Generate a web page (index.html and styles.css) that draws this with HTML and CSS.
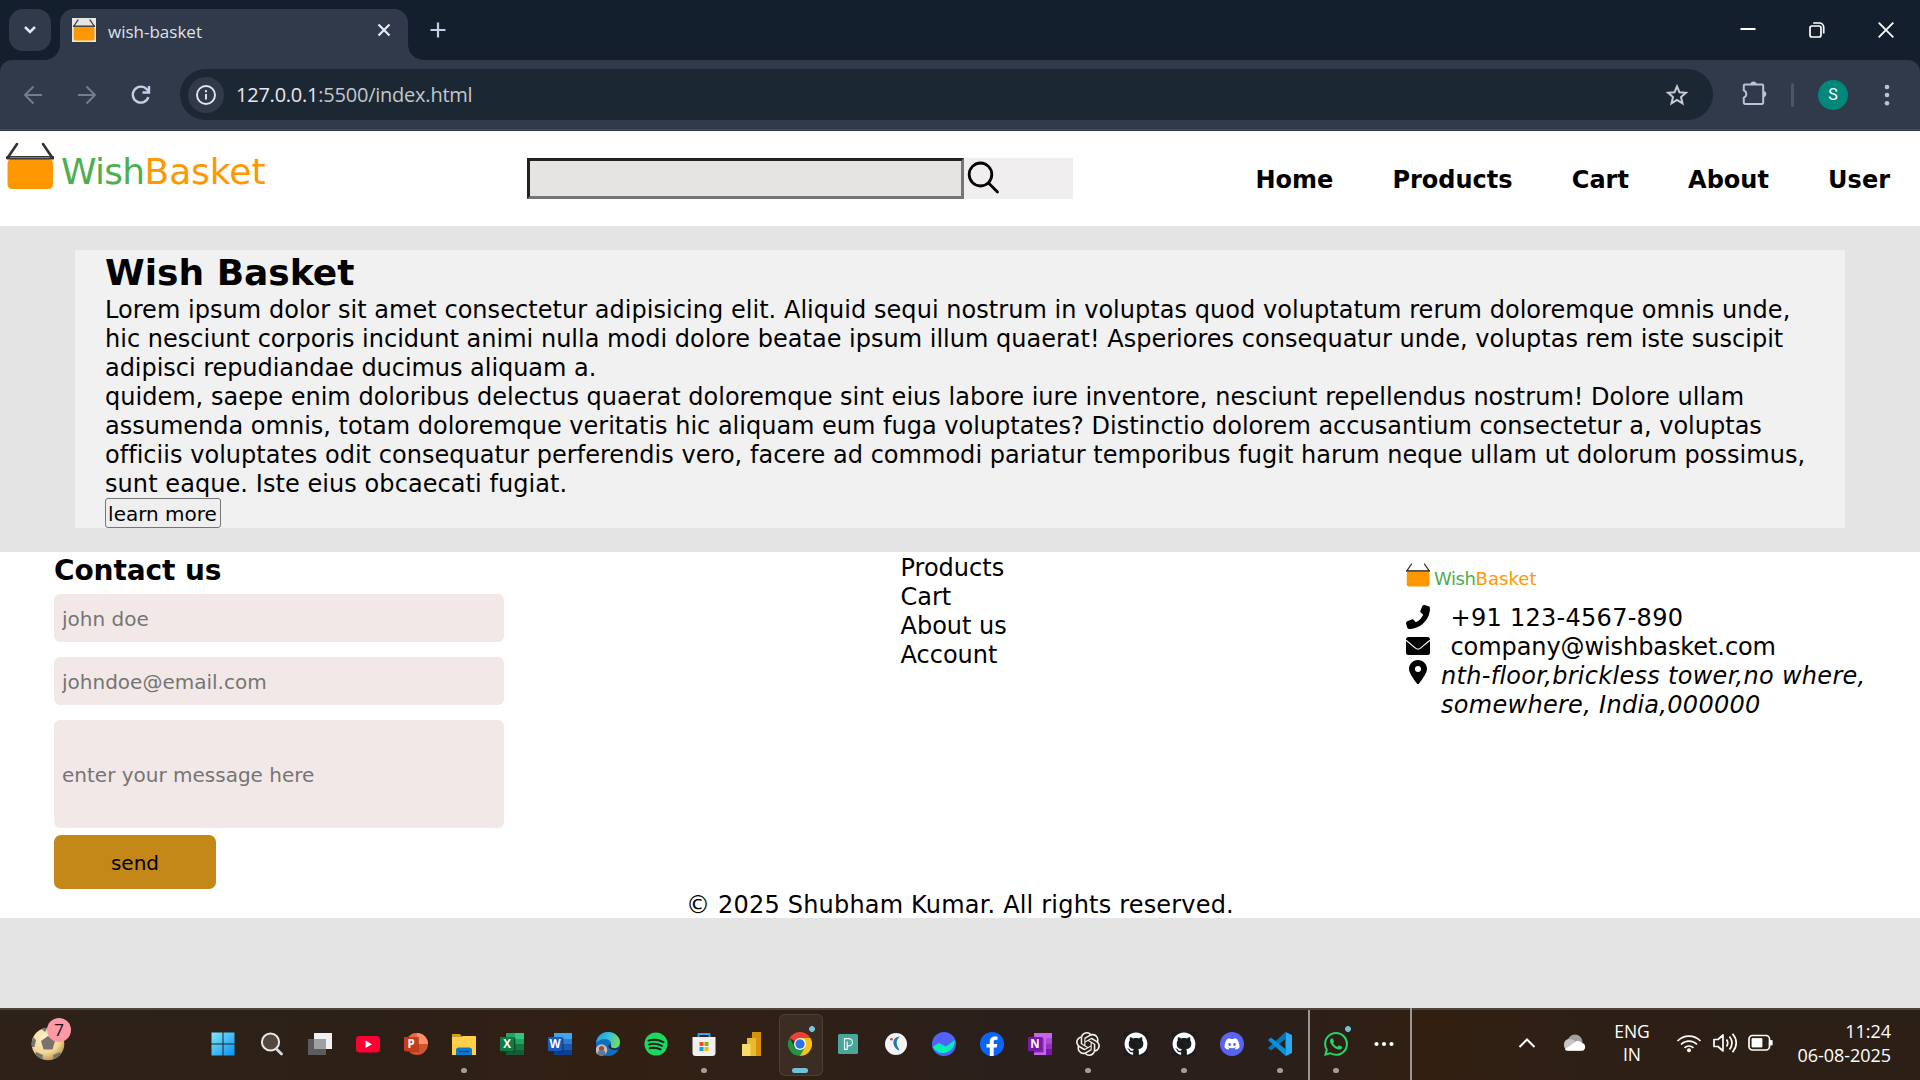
FILE: index.html
```html
<!DOCTYPE html>
<html lang="en">
<head>
<meta charset="utf-8">
<title>wish-basket</title>
<link rel="stylesheet" href="styles.css">
</head>
<body>
<svg class="defs" aria-hidden="true">
  <symbol id="basket" viewBox="0 0 48 48">
    <rect x="1.5" y="17" width="45.5" height="30" rx="4.5" fill="#ff9800"/>
    <path d="M11 2L2 15.3M37 2l9 13.3" stroke="#333" stroke-width="2.6" stroke-linecap="round"/>
    <path d="M1.5 15.8h45.5" stroke="#333" stroke-width="3.4" stroke-linecap="round"/>
    <path d="M4 15.6h40" stroke="#8a8a8a" stroke-width="1"/>
  </symbol>
  <symbol id="github" viewBox="-.4 -.4 16.8 16.8">
    <path fill="#1c1c1f" d="M-.4-.4h16.8v16.8H-.4z"/>
    <path fill="#fff" d="M8 0C3.58 0 0 3.58 0 8c0 3.54 2.29 6.53 5.47 7.59.4.07.55-.17.55-.38 0-.19-.01-.82-.01-1.49-2.01.37-2.53-.49-2.69-.94-.09-.23-.48-.94-.82-1.13-.28-.15-.68-.52-.01-.53.63-.01 1.08.58 1.23.82.72 1.21 1.87.87 2.33.66.07-.52.28-.87.51-1.07-1.78-.2-3.64-.89-3.64-3.95 0-.87.31-1.59.82-2.15-.08-.2-.36-1.02.08-2.12 0 0 .67-.21 2.2.82.64-.18 1.32-.27 2-.27s1.36.09 2 .27c1.53-1.04 2.2-.82 2.2-.82.44 1.1.16 1.92.08 2.12.51.56.82 1.27.82 2.15 0 3.07-1.87 3.75-3.65 3.95.29.25.54.73.54 1.48 0 1.07-.01 1.93-.01 2.2 0 .21.15.46.55.38A8.01 8.01 0 0016 8c0-4.42-3.58-8-8-8z"/>
  </symbol>
</svg>

<div class="tabstrip">
  <div class="tab-menu"><svg width="16" height="10" viewBox="0 0 16 10" fill="none" stroke="#e2e6ef" stroke-width="2.5"><path d="M3 2l5 5 5-5"/></svg></div>
  <div class="tab">
    <span class="favicon"><svg width="22" height="22"><use href="#basket"/></svg></span>
    <span class="tab-title">wish-basket</span>
    <svg class="tab-close" width="14" height="14" viewBox="0 0 14 14" stroke="#e8eaf0" stroke-width="2.2"><path d="M1.5 1.5l11 11M12.500 1.5l-11 11"/></svg>
  </div>
  <svg class="new-tab" width="16" height="16" viewBox="0 0 16 16" stroke="#c3cfe6" stroke-width="2.2"><path d="M8 .5v15M.5 8h15"/></svg>
  <div class="window-controls">
    <svg width="16" height="16" viewBox="0 0 16 16"><path d="M.5 7h15" stroke="#fff" stroke-width="2"/></svg>
    <svg width="16" height="16" viewBox="0 0 16 16" fill="none" stroke="#fff" stroke-width="1.7"><rect x="1" y="4" width="11" height="11" rx="2"/><path d="M4.200 1h6.300a4.200 4.200 0 0 1 4.200 4.200v6.300"/></svg>
    <svg width="16" height="16" viewBox="0 0 16 16" stroke="#fff" stroke-width="1.8"><path d="M.7.7l14.600 14.600M15.300.7L.7 15.300"/></svg>
  </div>
</div>

<div class="toolbar-back">
<div class="toolbar">
  <div class="nav-buttons">
    <svg width="20" height="20" viewBox="0 0 20 20" fill="none" stroke="#727d8e" stroke-width="2"><path d="M19 10H2M10.500 1.500L2 10l8.500 8.500"/></svg>
    <svg width="20" height="20" viewBox="0 0 20 20" fill="none" stroke="#727d8e" stroke-width="2"><path d="M1 10h17M9.500 1.500L18 10l-8.500 8.500"/></svg>
    <svg width="20" height="20" viewBox="0 0 20 20" fill="none" stroke="#c3cfe6" stroke-width="2.400"><path d="M17.400 12.200A8 8 0 1 1 15.800 4.300L17.500 6.200"/><path d="M18 1v6.500h-6.500"/></svg>
  </div>
  <div class="omnibox">
    <span class="site-info"><svg width="20" height="20" viewBox="0 0 20 20" fill="none" stroke="#e3e6ed" stroke-width="1.900"><circle cx="10" cy="10" r="9"/><path d="M10 9v5.600M10 5v2.200"/></svg></span>
    <span class="url"><b>127.0.0.1</b>:5500/index.html</span>
    <svg class="star" width="24" height="24" viewBox="0 0 24 24" fill="none" stroke="#c9cbd1" stroke-width="2"><path d="M12 3.300l2.500 6 6.400.5-4.900 4.200 1.500 6.300L12 17l-5.500 3.300L8 14 3.100 9.800l6.400-.5z"/></svg>
  </div>
  <svg class="puzzle" width="26" height="26" viewBox="0 0 26 26"><path d="M4 4.500h17a1.200 1.200 0 0 1 1.200 1.200v17a1.200 1.200 0 0 1-1.200 1.200H4a1.200 1.200 0 0 1-1.200-1.200v-5a4 4 0 0 0 0-7.400V5.700A1.200 1.200 0 0 1 4 4.500z" fill="none" stroke="#b8c4dc" stroke-width="2"/><path d="M9.400 4.500a3.100 3.100 0 0 1 6.200 0zM22.200 11a3.100 3.100 0 0 1 0 6.200z" fill="#b8c4dc"/></svg>
  <span class="divider"></span>
  <span class="avatar">S</span>
  <svg class="kebab" width="6" height="24" viewBox="0 0 6 24" fill="#b8c4dc"><circle cx="3" cy="4" r="2.300"/><circle cx="3" cy="12" r="2.300"/><circle cx="3" cy="20.300" r="2.300"/></svg>
</div>
</div>

<header class="site-header">
  <svg class="logo" width="280" height="60" viewBox="0 0 280 60"><use href="#basket" x="0" y="0" width="48" height="48"/><text x="55" y="42" font-size="36" fill="#4caf50" textLength="84">Wish</text><text x="138.500" y="42" font-size="36" fill="#ff9800" textLength="121">Basket</text></svg>
  <form class="search">
    <input class="search-input" aria-label="Search">
    <svg width="40" height="40" viewBox="0 0 40 40" fill="none" stroke="#000" stroke-width="2.800"><ellipse cx="16.500" cy="16.500" rx="11.300" ry="11.500"/><path d="M24.500 25l9 9" stroke-linecap="round"/></svg>
  </form>
  <nav class="site-nav"><a>Home</a><a>Products</a><a>Cart</a><a>About</a><a>User</a></nav>
</header>

<main class="main">
  <section class="hero">
    <h1>Wish Basket</h1>
    <p><span class="l1">Lorem ipsum dolor sit amet consectetur adipisicing elit. Aliquid sequi nostrum in voluptas quod voluptatum rerum doloremque omnis unde,</span>
    <span class="l2">hic nesciunt corporis incidunt animi nulla modi dolore beatae ipsum illum quaerat! Asperiores consequatur unde, voluptas rem iste suscipit</span>
    <span class="l3">adipisci repudiandae ducimus aliquam a.</span>
    <span class="l4">quidem, saepe enim doloribus delectus quaerat doloremque sint eius labore iure inventore, nesciunt repellendus nostrum! Dolore ullam</span>
    <span class="l5">assumenda omnis, totam doloremque veritatis hic aliquam eum fuga voluptates? Distinctio dolorem accusantium consectetur a, voluptas</span>
    <span class="l6">officiis voluptates odit consequatur perferendis vero, facere ad commodi pariatur temporibus fugit harum neque ullam ut dolorum possimus,</span>
    <span class="l7">sunt eaque. Iste eius obcaecati fugiat.</span></p>
    <button class="learn">learn more</button>
  </section>
</main>

<footer class="site-footer">
  <div class="footer-grid">
    <form class="contact">
      <h3>Contact us</h3>
      <input placeholder="john doe">
      <input placeholder="johndoe@email.com">
      <input class="message" placeholder="enter your message here">
      <button type="button" class="send">send</button>
    </form>
    <ul class="links"><li>Products</li><li>Cart</li><li>About us</li><li>Account</li></ul>
    <div class="company">
      <svg class="logo-small" width="140" height="28" viewBox="0 0 140 28"><use href="#basket" x="0" y="0" width="24" height="24"/><text x="28" y="22" font-size="18" fill="#4caf50" textLength="42">Wish</text><text x="69.500" y="22" font-size="18" fill="#ff9800" textLength="61">Basket</text></svg>
      <div class="row">
        <svg class="phone" width="24" height="24" viewBox="0 0 512 512"><path transform="matrix(-1 0 0 1 512 0)" d="M164.900 24.600c-7.700-18.600-28-28.500-47.400-23.200l-88 24C12.100 30.200 0 46 0 64C0 311.400 200.600 512 448 512c18 0 33.800-12.100 38.600-29.500l24-88c5.300-19.400-4.600-39.700-23.200-47.400l-96-40c-16.300-6.800-35.200-2.100-46.300 11.600L304.700 368C234.300 334.700 177.300 277.700 144 207.300L193.300 167c13.700-11.200 18.400-30 11.600-46.300l-40-96z"/></svg>
        <span class="tel">+91 123-4567-890</span>
      </div>
      <div class="row">
        <svg class="mail" width="24" height="18" viewBox="0 0 24 18"><rect width="24" height="18" rx="2.500"/><path d="M0 3.200l9.500 7.900q2.500 2 5 0L24 3.200" fill="none" stroke="#fff" stroke-width="1.200"/></svg>
        <span class="email">company@wishbasket.com</span>
      </div>
      <div class="row address">
        <svg class="pin" width="18" height="24" viewBox="0 0 384 512"><path d="M215.700 499.200C267 435 384 279.400 384 192C384 86 298 0 192 0S0 86 0 192c0 87.400 117 243 168.300 307.200c12.300 15.300 35.100 15.300 47.400 0zM192 128a64 64 0 1 1 0 128 64 64 0 1 1 0-128z"/></svg>
        <address>nth-floor,brickless tower,no where,<br>somewhere, India,000000</address>
      </div>
    </div>
  </div>
  <p class="copyright">© 2025 Shubham Kumar. All rights reserved.</p>
</footer>

<div class="taskbar">
  <div class="widget">
    <svg width="34" height="34" viewBox="0 0 34 34"><defs><radialGradient id="ball" cx=".4" cy=".3" r=".8"><stop offset="0" stop-color="#fdf0cf"/><stop offset=".6" stop-color="#f3d693"/><stop offset="1" stop-color="#a87f3c"/></radialGradient><clipPath id="ballclip"><circle cx="17" cy="17" r="16.300"/></clipPath></defs><circle cx="17" cy="17" r="16.300" fill="url(#ball)"/><g fill="#77736e" clip-path="url(#ballclip)"><path d="M17 9l7 5-2.500 8.500h-9L10 14zM0 8l5 5-1.500 7L-2 20zM5 25l7 3-1 7H2zM29 25l-7 3 1 7h9zM8 0h9l-3 5z"/></g></svg>
    <span class="badge">7</span>
  </div>
  <div class="apps">
    <span class="app"><svg class="start" width="24" height="24" viewBox="0 0 24 24"><defs><linearGradient id="win" x2="1" y2="1"><stop offset="0" stop-color="#7ce9fb"/><stop offset="1" stop-color="#0a8ff5"/></linearGradient></defs><path fill="url(#win)" d="M.5.500h11v11H.5zM12.500.500h11v11h-11zM.5 12.500h11v11H.5zM12.500 12.500h11v11h-11z"/></svg></span>
    <span class="app"><svg width="24" height="24" viewBox="0 0 24 24"><circle cx="10.500" cy="10" r="8.600" fill="#54473d" stroke="#e7e8ea" stroke-width="2"/><path d="M16.500 17l5 5" stroke="#d5dae2" stroke-width="2.800" stroke-linecap="round"/></svg></span>
    <span class="app"><svg width="24" height="24" viewBox="0 0 24 24"><path fill="#f1f1f1" d="M6 1h18v16H6z"/><path fill="#5c5c5c" d="M0 7h6v10h12v6H0z"/><path fill="#a0a0a0" d="M6 7h12v10H6z"/></svg></span>
    <span class="app"><svg width="24" height="24" viewBox="0 0 24 24"><rect y="4" width="24" height="16.500" rx="3.500" fill="#ff0033"/><path d="M9.500 8.500l6.500 3.700-6.500 3.700z" fill="#fff"/></svg></span>
    <span class="app"><svg width="24" height="24" viewBox="0 0 24 24"><circle cx="13" cy="12" r="11" fill="#d35230"/><path d="M13 1a11 11 0 0 1 11 11H13z" fill="#ff8f6b"/><path d="M13 1a11 11 0 0 0-11 11h11z" fill="#ed6c47"/><rect x="1" y="5" width="14" height="15" fill="#8c3017" opacity=".6"/><rect y="5" width="14" height="14" rx="1" fill="#c43e1c"/><text class="letter" x="7" y="16.200">P</text></svg></span>
    <span class="app run"><svg width="24" height="24" viewBox="0 0 24 24"><path d="M0 2h8l2 2.500H0z" fill="#e09b00"/><path d="M0 4.500h10L11 4h12a1 1 0 0 1 1 1v18H0z" fill="#ffd04a"/><path d="M4 23v-5a2.500 2.500 0 0 1 2.500-2.500h11A2.500 2.500 0 0 1 20 18v5z" fill="#1078c8"/><path d="M7 19.500h10" stroke="#064b86" stroke-width="1.200"/></svg></span>
    <span class="app"><svg width="24" height="24" viewBox="0 0 24 24"><path fill="#21a366" d="M6 1h9v6H6z"/><path fill="#33c481" d="M15 1h9v6h-9z"/><path fill="#107c41" d="M6 7h18v5.500H6z"/><path fill="#21a366" d="M15 7h9v5.500h-9z"/><path fill="#185c37" d="M6 12.500h18V23H6z"/><path fill="#107c41" d="M15 12.500h9V18h-9z"/><rect x="1" y="5.500" width="14.500" height="15" fill="#0b3f24" opacity=".6"/><rect y="5" width="14" height="14" rx="1" fill="#107c41"/><text class="letter" x="7" y="16.200">X</text></svg></span>
    <span class="app"><svg width="24" height="24" viewBox="0 0 24 24"><path fill="#41a5ee" d="M6 1h18v6H6z"/><path fill="#2b7cd3" d="M6 7h18v5.500H6z"/><path fill="#185abd" d="M6 12.500h18V18H6z"/><path fill="#103f91" d="M6 18h18v5H6z"/><rect x="1" y="5.500" width="14.500" height="15" fill="#0c2c66" opacity=".6"/><rect y="5" width="14" height="14" rx="1" fill="#185abd"/><text class="letter" x="7" y="16.200">W</text></svg></span>
    <span class="app"><svg width="24" height="24" viewBox="0 0 24 24"><defs><linearGradient id="edge" x1="0" y1=".2" x2="1" y2=".5"><stop offset="0" stop-color="#1e9bea"/><stop offset=".5" stop-color="#35c1d8"/><stop offset="1" stop-color="#6fe05a"/></linearGradient></defs><circle cx="12" cy="12" r="12" fill="#0f6dbd"/><path d="M0 11C1 4 6 0 12 0c7 0 12 5 12 10 0 4-3 6-6 6-3 0-4-1-3-3 1-3-2-6-6-6-4 0-7 2-9 4z" fill="url(#edge)"/><path d="M15 12c-1.500 3 1 4.500 4 4.500 2 0 3.500-.8 4.500-1.800-.3 1-.8 2-1.400 2.800-5 1.500-9.600-1-9.600-3.500 0-1 1-2 2.500-2z" fill="#2c201a"/><circle cx="5.500" cy="18" r="5.800" fill="#cdbbb4"/><circle cx="5.500" cy="16.500" r="2.600" fill="#8e5242"/><path d="M1.500 22a4 4 0 0 1 8 0 6 6 0 0 1-8 0z" fill="#63779a"/></svg></span>
    <span class="app"><svg width="24" height="24" viewBox="0 0 24 24"><circle cx="12" cy="12" r="11.500" fill="#1ed760"/><path d="M4.500 8.600q7.500-2.200 15 1.500M5.200 12.500q6.500-1.800 12.800 1.400M5.800 16.200q5.500-1.400 10.800 1.200" fill="none" stroke="#14251a" stroke-width="2" stroke-linecap="round"/></svg></span>
    <span class="app run"><svg width="24" height="24" viewBox="0 0 24 24"><path d="M6.500 5V2h11v3" fill="none" stroke="#2aa8f2" stroke-width="1.800"/><path d="M.5 5h23v16a3 3 0 0 1-3 3h-17a3 3 0 0 1-3-3z" fill="#f0f0f0"/><path fill="#f25022" d="M7.500 10h4v4h-4z"/><path fill="#7fba00" d="M12.500 10h4v4h-4z"/><path fill="#00a4ef" d="M7.500 15h4v4h-4z"/><path fill="#ffb900" d="M12.500 15h4v4h-4z"/></svg></span>
    <span class="app"><svg width="24" height="24" viewBox="0 0 24 24"><path d="M12 0h9v24h-9z" fill="#d8900f"/><path d="M7 6h9v18H7z" fill="#ecb92c"/><path d="M2 12h8.500v12H2z" fill="#f8dc6b"/></svg></span>
    <span class="app active"><svg width="24" height="24" viewBox="0 0 24 24"><path d="M12 12L1.600 6A12 12 0 0 1 22.400 6z" fill="#ea4335"/><path d="M12 12V6h10.400A12 12 0 0 1 12 24z" fill="#fbc116"/><path d="M1.600 6L6.800 15l5.200 3 5.200-3L12 24A12 12 0 0 1 1.600 6z" fill="#229342"/><circle cx="12" cy="12" r="6" fill="#fff"/><circle cx="12" cy="12" r="4.700" fill="#2a74e8"/></svg></span>
    <span class="app"><svg width="24" height="24" viewBox="0 0 24 24"><rect x="2" y="2" width="20" height="20" rx="1.500" fill="#4ba69a"/><path d="M8.500 17.300V6.700h4.300a3.600 3.600 0 0 1 0 7.200h-1.600v3.400zM11.200 13.900V9.600" fill="none" stroke="#e7fffb" stroke-width="1.200"/></svg></span>
    <span class="app"><svg width="24" height="24" viewBox="0 0 24 24"><circle cx="12" cy="12" r="11" fill="#f4f3f5"/><path d="M14 5.500c-5 1.500-6 7.500.8 12.500C12 14 10.300 9.500 14 5.500z" fill="#1e78ad" stroke="#1e78ad" stroke-width="1.200"/><circle cx="7.500" cy="7.300" r="1.300" fill="#e23a2e"/></svg></span>
    <span class="app"><svg width="24" height="24" viewBox="0 0 24 24"><circle cx="12" cy="12" r="12" fill="#5163fb"/><path d="M.4 15l6.600-4 7 3.500L22.800 8A12 12 0 0 1 .4 15z" fill="#00f0b5"/></svg></span>
    <span class="app"><svg width="24" height="24" viewBox="0 0 24 24"><circle cx="12" cy="12" r="12" fill="#0866ff"/><path d="M9.800 24v-8.500H6.500V12h3.300V9.500C9.800 6 12 4.500 15 4.500c1 0 2 .2 2.500.3v3h-1.600c-1.700 0-2.200.9-2.200 2V12h3.600l-.6 3.500h-3V24z" fill="#fff"/></svg></span>
    <span class="app"><svg width="24" height="24" viewBox="0 0 24 24"><path fill="#ca64ea" d="M6 1h18v22H6z"/><path fill="#ae4bd5" d="M18 6h6v5.500h-6z"/><path fill="#9332bf" d="M18 11.500h6V17h-6z"/><path fill="#7719aa" d="M18 17h6v6h-6z"/><rect x="1" y="5.500" width="14.500" height="15" fill="#4a0c6e" opacity=".6"/><rect y="5" width="14" height="14" rx="1" fill="#7719aa"/><text class="letter" x="7" y="16.200">N</text></svg></span>
    <span class="app run"><svg width="24" height="24" viewBox="0 0 24 24" fill="#f3f1ef"><path d="M22.2819 9.8211a5.9847 5.9847 0 0 0-.5157-4.9108 6.0462 6.0462 0 0 0-6.5098-2.9A6.0651 6.0651 0 0 0 4.9807 4.1818a5.9847 5.9847 0 0 0-3.9977 2.9 6.0462 6.0462 0 0 0 .7427 7.0966 5.98 5.98 0 0 0 .511 4.9107 6.051 6.051 0 0 0 6.5146 2.9001A5.9847 5.9847 0 0 0 13.2599 24a6.0557 6.0557 0 0 0 5.7718-4.2058 5.9894 5.9894 0 0 0 3.9977-2.9001 6.0557 6.0557 0 0 0-.7475-7.0729zm-9.022 12.6081a4.4755 4.4755 0 0 1-2.8764-1.0408l.1419-.0804 4.7783-2.7582a.7948.7948 0 0 0 .3927-.6813v-6.7369l2.02 1.1686a.071.071 0 0 1 .038.052v5.5826a4.504 4.504 0 0 1-4.4945 4.4944zm-9.6607-4.1254a4.4708 4.4708 0 0 1-.5346-3.0137l.142.0852 4.783 2.7582a.7712.7712 0 0 0 .7806 0l5.8428-3.3685v2.3324a.0804.0804 0 0 1-.0332.0615L9.74 19.9502a4.4992 4.4992 0 0 1-6.1408-1.6464zM2.3408 7.8956a4.485 4.485 0 0 1 2.3655-1.9728V11.6a.7664.7664 0 0 0 .3879.6765l5.8144 3.3543-2.0201 1.1685a.0757.0757 0 0 1-.071 0l-4.8303-2.7865A4.504 4.504 0 0 1 2.3408 7.872zm16.5963 3.8558L13.1038 8.364 15.1192 7.2a.0757.0757 0 0 1 .071 0l4.8303 2.7913a4.4944 4.4944 0 0 1-.6765 8.1042v-5.6772a.79.79 0 0 0-.407-.667zm2.0107-3.0231l-.142-.0852-4.7735-2.7818a.7759.7759 0 0 0-.7854 0L9.409 9.2297V6.8974a.0662.0662 0 0 1 .0284-.0615l4.8303-2.7866a4.4992 4.4992 0 0 1 6.6802 4.66zM8.3065 12.863l-2.02-1.1638a.0804.0804 0 0 1-.038-.0567V6.0742a4.4992 4.4992 0 0 1 7.3757-3.4537l-.142.0805L8.704 5.459a.7948.7948 0 0 0-.3927.6813zm1.0976-2.3654l2.602-1.4998 2.6069 1.4998v2.9994l-2.5974 1.4997-2.6067-1.4997Z"/></svg></span>
    <span class="app"><svg width="24" height="24"><use href="#github"/></svg></span>
    <span class="app run"><svg width="24" height="24"><use href="#github"/></svg></span>
    <span class="app"><svg width="24" height="24" viewBox="0 0 24 24"><circle cx="12" cy="12" r="12" fill="#5865f2"/><path transform="translate(4.600 4.500) scale(.62)" fill="#fff" d="M20.317 4.3698a19.7913 19.7913 0 00-4.8851-1.5152.0741.0741 0 00-.0785.0371c-.211.3753-.4447.8648-.6083 1.2495-1.8447-.2762-3.68-.2762-5.4868 0-.1636-.3933-.4058-.8742-.6177-1.2495a.077.077 0 00-.0785-.037 19.7363 19.7363 0 00-4.8852 1.515.0699.0699 0 00-.0321.0277C.5334 9.0458-.319 13.5799.0992 18.0578a.0824.0824 0 00.0312.0561c2.0528 1.5076 4.0413 2.4228 5.9929 3.0294a.0777.0777 0 00.0842-.0276c.4616-.6304.8731-1.2952 1.226-1.9942a.076.076 0 00-.0416-.1057c-.6528-.2476-1.2743-.5495-1.8722-.8923a.077.077 0 01-.0076-.1277c.1258-.0943.2517-.1923.3718-.2914a.0743.0743 0 01.0776-.0105c3.9278 1.7933 8.18 1.7933 12.0614 0a.0739.0739 0 01.0785.0095c.1202.099.246.1981.3728.2924a.077.077 0 01-.0066.1276 12.2986 12.2986 0 01-1.873.8914.0766.0766 0 00-.0407.1067c.3604.698.7719 1.3628 1.225 1.9932a.076.076 0 00.0842.0286c1.961-.6067 3.9495-1.5219 6.0023-3.0294a.077.077 0 00.0313-.0552c.5004-5.177-.8382-9.6739-3.5485-13.6604a.061.061 0 00-.0312-.0286zM8.02 15.3312c-1.1825 0-2.1569-1.0857-2.1569-2.419 0-1.3332.9555-2.4189 2.157-2.4189 1.2108 0 2.1757 1.0952 2.1568 2.419 0 1.3332-.9555 2.4189-2.1569 2.4189zm7.9748 0c-1.1825 0-2.1569-1.0857-2.1569-2.419 0-1.3332.9554-2.4189 2.1569-2.4189 1.2108 0 2.1757 1.0952 2.1568 2.419 0 1.3332-.946 2.4189-2.1568 2.4189Z"/></svg></span>
    <span class="app run"><svg width="24" height="24" viewBox="0 0 24 24"><path d="M17.500 0L24 3v18l-6.500 3z" fill="#2aaaf3"/><path d="M17.500 0L18 6.500 3 18.500 0 16z" fill="#0077c2"/><path d="M17.500 24L18 17.500 3 5.500 0 8z" fill="#0a8fdd"/></svg></span>
  </div>
  <span class="sep low"></span>
  <div class="apps">
    <span class="app run notify"><svg width="24" height="24" viewBox="0 0 24 24" fill="#25d366"><path d="M17.472 14.382c-.297-.149-1.758-.867-2.03-.967-.273-.099-.471-.148-.67.15-.197.297-.767.966-.94 1.164-.173.199-.347.223-.644.075-.297-.15-1.255-.463-2.39-1.475-.883-.788-1.48-1.761-1.653-2.059-.173-.297-.018-.458.13-.606.134-.133.298-.347.446-.52.149-.174.198-.298.298-.497.099-.198.05-.371-.025-.52-.075-.149-.669-1.612-.916-2.207-.242-.579-.487-.5-.669-.51-.173-.008-.371-.01-.57-.01-.198 0-.52.074-.792.372-.272.297-1.040 1.016-1.040 2.479 0 1.462 1.065 2.875 1.213 3.074.149.198 2.096 3.200 5.077 4.487.709.306 1.262.489 1.694.625.712.227 1.360.195 1.871.118.571-.085 1.758-.719 2.006-1.413.248-.694.248-1.289.173-1.413-.074-.124-.272-.198-.57-.347m-5.421 7.403h-.004a9.870 9.870 0 01-5.031-1.378l-.361-.214-3.741.982.998-3.648-.235-.374a9.860 9.860 0 01-1.510-5.260c.001-5.450 4.436-9.884 9.888-9.884 2.640 0 5.122 1.030 6.988 2.898a9.825 9.825 0 012.893 6.994c-.003 5.450-4.437 9.884-9.885 9.884m8.413-18.297A11.815 11.815 0 0012.050 0C5.495 0 .16 5.335.157 11.892c0 2.096.547 4.142 1.588 5.945L.057 24l6.305-1.654a11.882 11.882 0 005.683 1.448h.005c6.554 0 11.890-5.335 11.893-11.893a11.821 11.821 0 00-3.480-8.413z"/></svg></span>
    <span class="app"><svg width="24" height="24" viewBox="0 0 24 24" fill="#fff"><circle cx="4.500" cy="12" r="2.100"/><circle cx="12" cy="12" r="2.100"/><circle cx="19.500" cy="12" r="2.100"/></svg></span>
  </div>
  <span class="sep high"></span>
  <div class="tray">
    <svg width="18" height="12" viewBox="0 0 18 12" fill="none" stroke="#fff" stroke-width="2"><path d="M1.500 10L9 2.500 16.500 10"/></svg>
    <svg class="cloud" width="26" height="18" viewBox="0 0 26 18"><circle cx="13" cy="8" r="7.500" fill="#a3a09d"/><path d="M7 16.500A5.800 5.800 0 0 1 7 5c5 0 9 4 12 11.500z" fill="#c9c7c5"/><path d="M3 15l11-7.500c2-1 5 0 6 1.500a4 4 0 0 1 0 7.800H6C4 16.800 3 16 3 15z" fill="#fff"/></svg>
    <div class="lang"><span>ENG</span><span>IN</span></div>
    <div class="status">
      <svg width="26" height="20" viewBox="0 0 26 20" fill="none" stroke="#fff" stroke-width="1.700"><path d="M1.500 8a16 16 0 0 1 23 0M5 11.500a11.200 11.200 0 0 1 16 0M8.500 14.800a6.500 6.500 0 0 1 9 0"/><circle cx="13" cy="17.300" r="2" fill="#fff" stroke="none"/></svg>
      <svg width="26" height="22" viewBox="0 0 26 22" fill="none" stroke="#fff" stroke-width="1.700"><path d="M2 7.500h4l5-4.500v16l-5-4.500H2zM14.500 7.500q2.500 3.500 0 7M17.500 4.500q5 6.500 0 13M20.500 1.800q7.500 9 0 18.500" stroke-linejoin="round"/></svg>
      <svg width="26" height="18" viewBox="0 0 26 18"><rect x="1" y="1.500" width="20.500" height="14.500" rx="3.500" fill="none" stroke="#fff" stroke-width="1.700"/><path d="M4 4.500h10v8.500H4zM22 6.500h2.200v4.500H22z" fill="#fff" stroke="#fff" stroke-width=".8" stroke-linejoin="round"/></svg>
    </div>
    <div class="clock"><span>11:24</span><span>06-08-2025</span></div>
  </div>
</div>
</body>
</html>
```
FILE: styles.css
```css
* { box-sizing: border-box; margin: 0; padding: 0; }
body {
  width: 1920px;
  height: 1080px;
  overflow: hidden;
  display: flex;
  flex-direction: column;
  background: #e4e4e4;
  font: 24px/29px "DejaVu Sans", Verdana, sans-serif;
  color: #000;
}
svg { display: block; flex: none; }
.defs { position: absolute; width: 0; height: 0; }

/* Browser tab strip */
.tabstrip {
  height: 60px;
  flex: none;
  display: flex;
  align-items: flex-start;
  padding: 9px 26px 0 9px;
  background: #141f2e;
}
.tab-menu {
  width: 42px;
  height: 42px;
  border-radius: 14px;
  background: #303a4b;
  display: grid;
  place-items: center;
}
.tab {
  position: relative;
  width: 348px;
  height: 51px;
  margin-left: 9px;
  padding: 0 17px 9px 12px;
  border-radius: 14px 14px 0 0;
  background: #303a4b;
  display: flex;
  align-items: center;
}
.tab::before, .tab::after {
  content: "";
  position: absolute;
  bottom: 0;
  width: 15px;
  height: 15px;
}
.tab::before { left: -15px; background: radial-gradient(circle at 0 0, transparent 14.500px, #303a4b 15px); }
.tab::after { right: -15px; background: radial-gradient(circle at 100% 0, transparent 14.500px, #303a4b 15px); }
.favicon {
  width: 24px;
  height: 24px;
  background: #e8e6e3;
  display: grid;
  place-items: center;
}
.tab-title {
  margin-left: 12px;
  padding-top: 3px;
  font: 17px/24px "Open Sans", sans-serif;
  color: #dfe2ea;
}
.tab-close { margin-left: auto; }
.new-tab { margin: 13px 0 0 22px; }
.window-controls { margin: 13px 0 0 auto; display: flex; gap: 53px; }

/* Browser toolbar */
.toolbar-back { flex: none; background: #141f2e; }
.toolbar {
  height: 71px;
  padding: 0 30px 2px 23px;
  border-radius: 12px 12px 0 0;
  background: #303a4b;
  box-shadow: inset 0 -1px #303a4b, inset 0 -2px #454e5c;
  display: flex;
  align-items: center;
}
.nav-buttons { display: flex; gap: 34px; width: 157px; }
.omnibox {
  width: 1533px;
  height: 51px;
  padding: 0 24px 0 8px;
  border-radius: 26px;
  background: #1b2733;
  display: flex;
  align-items: center;
}
.site-info {
  width: 36px;
  height: 36px;
  border-radius: 50%;
  background: #303a4b;
  display: grid;
  place-items: center;
}
.url { margin-left: 12px; font: 20px/30px "Open Sans", sans-serif; letter-spacing: -.23px; color: #c3c6cc; }
.url b { font-weight: 400; color: #e6e8ee; }
.star { margin-left: auto; }
.puzzle { margin: 0 0 3px 28px; }
.divider { width: 3px; height: 24px; margin-left: 24px; border-radius: 2px; background: #4a5567; }
.avatar {
  width: 30px;
  height: 30px;
  margin-left: 24px;
  border-radius: 50%;
  background: #00897b;
  color: #fff;
  font: 16px/30px Roboto, sans-serif;
  text-align: center;
}
.kebab { margin-left: auto; }

/* Site header */
.site-header {
  height: 95px;
  flex: none;
  padding: 0 30px 0 6px;
  background: #fff;
  display: flex;
}
.logo { margin-top: 10.500px; overflow: visible; }
.search {
  width: 546px;
  height: 41px;
  margin: 27px 0 0 241px;
  background: #f1eeef;
  display: flex;
}
.search-input {
  width: 437px;
  height: 41px;
  border: 3px solid;
  border-color: #222 #767676 #767676 #222;
  background: #e5e4e2;
}
.site-nav {
  margin: 35px 0 0 auto;
  display: flex;
  gap: 59.200px;
  font-weight: 700;
}

/* Intro block */
.main { padding: 24px 75px; flex: none; }
.hero { height: 278px; padding-left: 30px; background: #f1f1f1; }
.hero h1 { height: 44px; font-size: 36px; line-height: 44px; padding-top: 1px; }
.hero p { height: 204px; padding-top: 1.500px; }
.hero p span { display: block; white-space: nowrap; }
.l1 { letter-spacing: .043px; }
.l2 { letter-spacing: .010px; }
.l3 { letter-spacing: -.040px; }
.l4 { letter-spacing: .021px; }
.l5 { letter-spacing: 0; }
.l6 { letter-spacing: .030px; }
.l7 { letter-spacing: .070px; }
.learn {
  display: block;
  width: 116px;
  height: 30px;
  border: 1px solid #767676;
  border-radius: 3px;
  background: #efefef;
  padding: 1px 1px 0 0;
  font: 20px/28px "DejaVu Sans", Verdana, sans-serif;
  text-align: center;
  white-space: nowrap;
}

/* Footer */
.site-footer { height: 366px; flex: none; background: #fff; }
.footer-grid {
  height: 337px;
  padding-left: 54px;
  display: grid;
  grid-template-columns: 846.500px 505.500px 1fr;
}
.contact h3 { font-size: 28px; line-height: 35px; height: 42px; padding-top: 1px; letter-spacing: -.1px; }
.contact input {
  display: block;
  width: 450px;
  height: 48px;
  margin-bottom: 15px;
  padding: 1px 8px 0;
  border: 0;
  border-radius: 6px;
  background: #f2e8e7;
  font: 20px "DejaVu Sans", Verdana, sans-serif;
}
.contact input::placeholder { color: #757575; }
.contact .message { height: 108px; margin-bottom: 7px; }
.send {
  display: block;
  width: 162px;
  height: 54px;
  padding-top: 1px;
  border: 0;
  border-radius: 7px;
  background: #c38817;
  font: 20px "DejaVu Sans", Verdana, sans-serif;
}
.links { list-style: none; padding-top: 1.500px; }
.logo-small { margin: 11px 0 14px; overflow: visible; }
.row { display: flex; height: 29px; }
.tel { margin: -1px 0 0 20.500px; letter-spacing: .28px; }
.mail { margin-top: 3px; }
.email { margin: -1px 0 0 20.500px; letter-spacing: -.080px; }
.address { height: 58px; }
.pin { margin: -3px 3px 0; }
address { margin: -1px 0 0 11px; letter-spacing: .29px; white-space: nowrap; }
.copyright { padding-top: 1.500px; text-align: center; letter-spacing: .190px; }

/* Taskbar */
.taskbar {
  height: 72px;
  margin-top: auto;
  flex: none;
  display: flex;
  border-top: 2px solid #4d443d;
  background: linear-gradient(90deg, #2d2118 0, #2c2017 18%, #321f13 32%, #2f2016 42%, #2a1f1b 52%, #2a1f1b 66%, #321f12 74%, #2e1f15 82%, #2b1f16 100%);
}
.widget { position: relative; width: 200px; padding: 17px 0 0 31px; }
.badge {
  position: absolute;
  left: 47px;
  top: 8px;
  width: 24px;
  height: 24px;
  border-radius: 50%;
  background: #ff99a4;
  color: #111;
  font: 17px/24px "Open Sans", sans-serif;
  text-align: center;
}
.apps { display: flex; }
.app {
  position: relative;
  width: 48px;
  height: 70px;
  padding: 22px 0 0 12px;
}
.start { margin-left: -1.500px; }
.widget + .apps { width: 1108px; }
.app.run::after, .app.active::after {
  content: "";
  position: absolute;
  left: 21px;
  top: 58px;
  width: 6px;
  height: 5px;
  border-radius: 3px;
  background: #a39e9b;
}
.app.active::after { left: 16px; width: 16px; background: #6fc3d8; }
.app.active::before {
  content: "";
  position: absolute;
  left: 3px;
  top: 4px;
  width: 42px;
  height: 60px;
  border: 1px solid rgba(255, 255, 255, .09);
  border-radius: 6px;
  background: rgba(255, 255, 255, .06);
}
.app svg { position: relative; }
.active, .notify { background: radial-gradient(circle at 36px 19px, #6fc3d8 2.600px, transparent 3.200px); }
.letter { font: 700 11.500px "Open Sans", sans-serif; fill: #fff; text-anchor: middle; }
.sep { width: 2px; background: #9c9694; }
.high { margin: -2px 0 0 2px; }
.low + .apps { width: 96px; margin-left: 2px; }
.tray {
  flex: 1;
  display: flex;
  align-items: center;
  padding: 0 29px 4px 106px;
  color: #fff;
  font: 18px/24px "Open Sans", sans-serif;
}
.cloud { margin-left: 26px; }
.lang {
  display: flex;
  flex-direction: column;
  width: 38px;
  margin-left: 25px;
  font-size: 17.500px;
  line-height: 23px;
  text-align: center;
}
.status { display: flex; align-items: center; gap: 10px; margin-left: 25px; }
.clock { margin-left: auto; display: flex; flex-direction: column; text-align: right; letter-spacing: -.050px; }
```
